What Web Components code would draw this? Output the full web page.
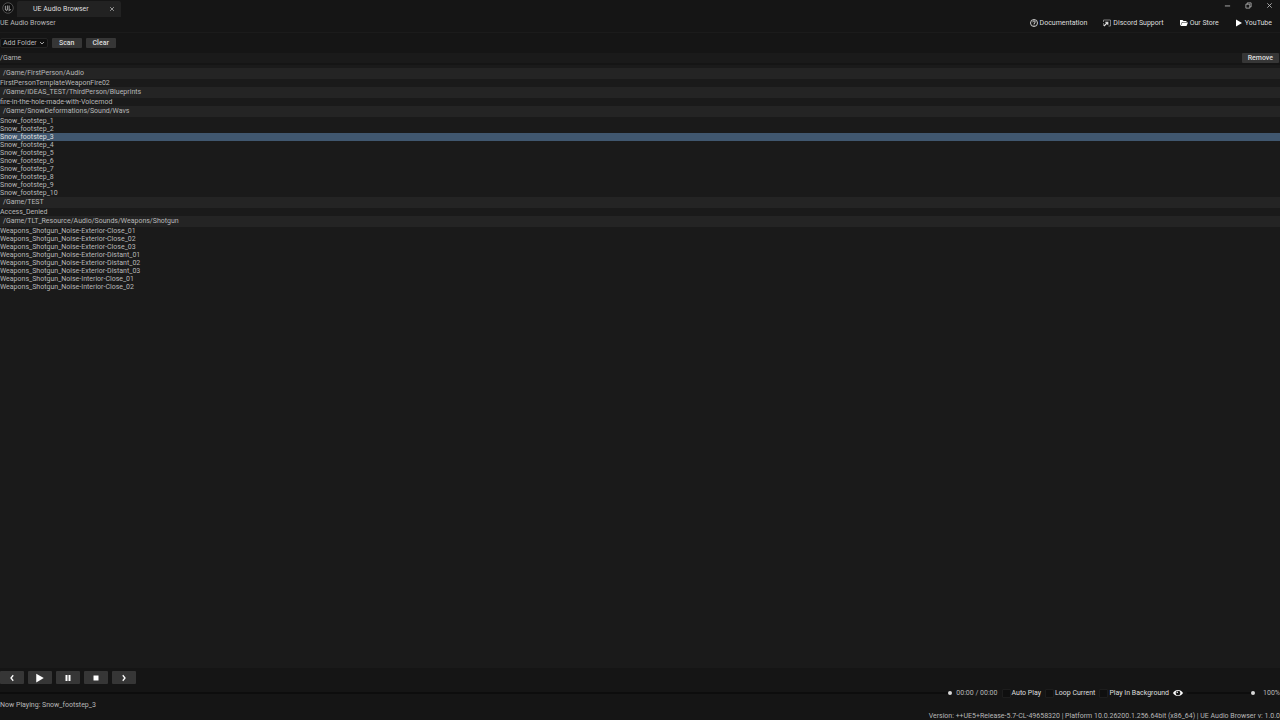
<!DOCTYPE html>
<html lang="en">
<head>
<meta charset="utf-8">
<title>UE Audio Browser</title>
<style>
    :root {
        --bar: #151515;
        --panel: #1a1a1a;
        --header: #242424;
        --button: #363636;
        --select: #40576f;
        --text: #b8b8b8;
        --bright: #dedede;
    }
    body {
        margin: 0;
        background: var(--bar);
        color: var(--text);
        font: 7px/8px Roboto, "Liberation Sans", sans-serif;
    }
</style>
</head>
<body>
<audio-browser></audio-browser>

<script>
const icons = {
    logo: '<circle cx="8" cy="8" r="7" fill="#0c0c0c" stroke="#666" stroke-width="1"/><path d="M4.500 5v5L7 11.800M7.200 4.500v6M9.500 4.500v7L12 9.800" fill="none" stroke="#999" stroke-width="1.400"/>',
    close: '<path d="M3 3l10 10M13 3L3 13" fill="none" stroke="currentColor" stroke-width="2"/>',
    minimize: '<path d="M2 9h12" fill="none" stroke="currentColor" stroke-width="2"/>',
    restore: '<path d="M2 5h9v9H2zM5 5V2h9v9h-3" fill="none" stroke="currentColor" stroke-width="1.800"/>',
    help: '<circle cx="8" cy="8" r="7" fill="none" stroke="currentColor" stroke-width="1.800"/><path d="M5.500 6.500C5.500 3 10.500 3 10.500 6c0 1.500-2.500 2-2.500 4M8 11.200v1.800" fill="none" stroke="currentColor" stroke-width="2"/>',
    discord: '<path d="M1 6V2h14v12h-4" fill="none" stroke="#999" stroke-width="1.600"/><path d="M2 14l6-6M4.500 6.500H9.500V11.500" fill="none" stroke="currentColor" stroke-width="2.400"/><path d="M1 8v6" stroke="#999" stroke-width="1.400"/>',
    folder: '<path d="M0 13V2h5l2 2h6v2H4L1 13zM4.500 7H16l-3 7H1.500z" fill="#fff"/>',
    play: '<path d="M2 1v14l12-7z" fill="#fff"/>',
    pause: '<path d="M3 2h4v12H3zM9 2h4v12H9z" fill="currentColor"/>',
    stop: '<path d="M3 3h10v10H3z" fill="currentColor"/>',
    prev: '<path d="M10.500 2.500L6 8l4.500 5.500" fill="none" stroke="currentColor" stroke-width="2.600"/>',
    next: '<path d="M5.500 2.500L10 8l-4.500 5.500" fill="none" stroke="currentColor" stroke-width="2.600"/>',
    down: '<path d="M3 5.500L8 10.500 13 5.500" fill="none" stroke="currentColor" stroke-width="2.600"/>',
    eye: '<path d="M0 8C3.500 1.500 12.500 1.500 16 8 12.500 14.500 3.500 14.500 0 8z" fill="#fff"/><circle cx="8" cy="8" r="3.800" fill="#151515"/><circle cx="6.800" cy="6.800" r="1.200" fill="#fff"/>'
};

class UeIcon extends HTMLElement {
    connectedCallback() {
        const size = this.getAttribute('size') || 8;
        this.attachShadow({ mode: 'open' }).innerHTML = `
            <style>
                :host { display: inline-flex; flex: none; }
                svg { display: block; }
            </style>
            <svg width="${size}" height="${size}" viewBox="0 0 16 16" aria-hidden="true">${icons[this.getAttribute('name')]}</svg>
        `;
    }
}

class UeButton extends HTMLElement {
    connectedCallback() {
        const label = this.getAttribute('label');
        this.attachShadow({ mode: 'open' }).innerHTML = `
            <style>
                :host { display: inline-flex; }
                button {
                    display: flex;
                    align-items: center;
                    justify-content: center;
                    gap: 2px;
                    min-width: 30px;
                    padding: 1px 6px;
                    border: 0;
                    border-radius: 1px;
                    background: var(--button);
                    color: var(--bright);
                    font: inherit;
                    font-weight: 500;
                }
                :host([kind="menu"]) button {
                    padding: 0 2px;
                    border: 1px solid #242424;
                    border-radius: 2px;
                    background: #0f0f0f;
                    color: var(--text);
                    font-weight: 400;
                }
                :host([kind="plain"]) button {
                    min-width: 0;
                    padding: 0;
                    background: none;
                    color: var(--text);
                }
                :host([kind="transport"]) button {
                    min-width: 24px;
                    height: 13px;
                    color: #fff;
                }
            </style>
            <button type="button" ${label ? `aria-label="${label}"` : ''}><slot></slot></button>
        `;
    }
}

class UeLink extends HTMLElement {
    connectedCallback() {
        this.attachShadow({ mode: 'open' }).innerHTML = `
            <style>
                :host { display: block; }
                a {
                    display: flex;
                    align-items: center;
                    gap: 2px;
                    color: var(--bright);
                    text-decoration: none;
                }
            </style>
            <a href="#"><ue-icon name="${this.getAttribute('icon')}"></ue-icon><slot></slot></a>
        `;
    }
}

class UeCheck extends HTMLElement {
    connectedCallback() {
        this.attachShadow({ mode: 'open' }).innerHTML = `
            <style>
                :host { display: block; }
                label { display: flex; align-items: center; gap: 1px; color: var(--bright); }
                input {
                    appearance: none;
                    width: 9px;
                    height: 9px;
                    margin: 0;
                    border: 1px solid #1d1d1d;
                    border-radius: 1px;
                    background: #0f0f0f;
                }
                input:checked { background: #0070e0; }
            </style>
            <label><input type="checkbox"><slot></slot></label>
        `;
    }
}

class UeSlider extends HTMLElement {
    connectedCallback() {
        this.attachShadow({ mode: 'open' }).innerHTML = `
            <style>
                :host { display: flex; }
                input {
                    appearance: none;
                    flex: 1;
                    min-width: 0;
                    height: 6px;
                    margin: 0;
                    background: linear-gradient(#0d0d0d, #0d0d0d) center / 100% 2px no-repeat;
                }
                input::-webkit-slider-thumb {
                    appearance: none;
                    width: 4px;
                    height: 4px;
                    border-radius: 50%;
                    background: #d8d8d8;
                }
            </style>
            <input type="range" min="0" max="100" value="100" aria-label="${this.getAttribute('label')}">
        `;
    }
}

class SoundGroup extends HTMLElement {
    connectedCallback() {
        const selected = this.getAttribute('selected');
        const items = this.getAttribute('items').split('|');
        this.attachShadow({ mode: 'open' }).innerHTML = `
            <style>
                :host { display: block; }
                h2 {
                    margin: 0;
                    padding: 1px 3px 2px;
                    background: var(--header);
                    font: inherit;
                }
                ul { margin: 0; padding: 0; list-style: none; }
                li[aria-current] { background: var(--select); color: var(--bright); }
            </style>
            <h2>${this.getAttribute('path')}</h2>
            <ul>${items.map(i => `<li${i === selected ? ' aria-current="true"' : ''}>${i}</li>`).join('')}</ul>
        `;
    }
}

class TitleBar extends HTMLElement {
    connectedCallback() {
        this.attachShadow({ mode: 'open' }).innerHTML = `
            <style>
                :host { display: flex; align-items: flex-start; height: 18px; }
                .logo { margin: 2px 3px 0 2px; }
                .tab {
                    display: flex;
                    align-items: center;
                    justify-content: space-between;
                    width: 82px;
                    height: 16px;
                    margin-top: 1px;
                    padding: 0 6px 0 16px;
                    border-radius: 2px 2px 0 0;
                    background: #222;
                    color: var(--bright);
                }
                .window { display: flex; gap: 14px; margin: 2px 7px 0 auto; }
            </style>
            <ue-icon class="logo" name="logo" size="12"></ue-icon>
            <div class="tab">
                <span>UE Audio Browser</span>
                <ue-button kind="plain" label="Close tab"><ue-icon name="close" size="6"></ue-icon></ue-button>
            </div>
            <div class="window">
                <ue-button kind="plain" label="Minimize"><ue-icon name="minimize" size="7"></ue-icon></ue-button>
                <ue-button kind="plain" label="Restore"><ue-icon name="restore" size="7"></ue-icon></ue-button>
                <ue-button kind="plain" label="Close"><ue-icon name="close" size="7"></ue-icon></ue-button>
            </div>
        `;
    }
}

class PlayerBar extends HTMLElement {
    connectedCallback() {
        this.attachShadow({ mode: 'open' }).innerHTML = `
            <style>
                :host { display: block; padding-top: 3px; }
                .transport { display: flex; gap: 4px; }
                .seek { display: flex; align-items: center; height: 10px; margin-top: 4px; }
                .seek > ue-slider:first-child { flex: 1; }
                .time { margin: 0 4px; }
                .checks { display: flex; gap: 4px; }
                .eye { margin: 0 4px; }
                .volume { width: 68px; }
                .percent { margin-left: 8px; }
                .now { margin-top: 3px; }
                .version { margin-top: 3px; text-align: right; }
            </style>
            <div class="transport">
                <ue-button kind="transport" label="Previous"><ue-icon name="prev"></ue-icon></ue-button>
                <ue-button kind="transport" label="Play"><ue-icon name="play" size="10"></ue-icon></ue-button>
                <ue-button kind="transport" label="Pause"><ue-icon name="pause"></ue-icon></ue-button>
                <ue-button kind="transport" label="Stop"><ue-icon name="stop"></ue-icon></ue-button>
                <ue-button kind="transport" label="Next"><ue-icon name="next"></ue-icon></ue-button>
            </div>
            <div class="seek">
                <ue-slider label="Position"></ue-slider>
                <span class="time">00:00 / 00:00</span>
                <div class="checks">
                    <ue-check>Auto Play</ue-check>
                    <ue-check>Loop Current</ue-check>
                    <ue-check>Play In Background</ue-check>
                </div>
                <ue-button class="eye" kind="plain" label="Show volume"><ue-icon name="eye" size="10"></ue-icon></ue-button>
                <ue-slider class="volume" label="Volume"></ue-slider>
                <span class="percent">100%</span>
            </div>
            <div class="now">Now Playing: Snow_footstep_3</div>
            <div class="version">Version: ++UE5+Release-5.7-CL-49658320 | Platform 10.0.26200.1.256.64bit (x86_64) | UE Audio Browser v: 1.0.0</div>
        `;
    }
}

class AudioBrowser extends HTMLElement {
    connectedCallback() {
        this.attachShadow({ mode: 'open' }).innerHTML = `
            <style>
                :host { display: flex; flex-direction: column; height: 100vh; overflow: hidden; }
                .menu { display: flex; justify-content: space-between; align-items: center; height: 10px; }
                nav { display: flex; gap: 16px; margin-right: 8px; }
                .tools {
                    display: flex;
                    gap: 4px;
                    margin-top: 4px;
                    padding: 5px 0;
                    border-top: 1px solid #1b1b1b;
                }
                .root {
                    display: flex;
                    justify-content: space-between;
                    align-items: center;
                    padding-right: 1px;
                    background: var(--panel);
                }
                main { flex: 1; min-height: 0; margin-top: 2px; padding-top: 3px; background: var(--panel); overflow: hidden; }
            </style>
            <title-bar></title-bar>
            <div class="menu">
                <span>UE Audio Browser</span>
                <nav>
                    <ue-link icon="help">Documentation</ue-link>
                    <ue-link icon="discord">Discord Support</ue-link>
                    <ue-link icon="folder">Our Store</ue-link>
                    <ue-link icon="play">YouTube</ue-link>
                </nav>
            </div>
            <div class="tools">
                <ue-button kind="menu">Add Folder <ue-icon name="down" size="6"></ue-icon></ue-button>
                <ue-button>Scan</ue-button>
                <ue-button>Clear</ue-button>
            </div>
            <div class="root"><span>/Game</span><ue-button>Remove</ue-button></div>
            <main>
                <sound-group path="/Game/FirstPerson/Audio" items="FirstPersonTemplateWeaponFire02"></sound-group>
                <sound-group path="/Game/IDEAS_TEST/ThirdPerson/Blueprints" items="fire-in-the-hole-made-with-Voicemod"></sound-group>
                <sound-group path="/Game/SnowDeformations/Sound/Wavs" selected="Snow_footstep_3"
                    items="Snow_footstep_1|Snow_footstep_2|Snow_footstep_3|Snow_footstep_4|Snow_footstep_5|Snow_footstep_6|Snow_footstep_7|Snow_footstep_8|Snow_footstep_9|Snow_footstep_10"></sound-group>
                <sound-group path="/Game/TEST" items="Access_Denied"></sound-group>
                <sound-group path="/Game/TLT_Resource/Audio/Sounds/Weapons/Shotgun"
                    items="Weapons_Shotgun_Noise-Exterior-Close_01|Weapons_Shotgun_Noise-Exterior-Close_02|Weapons_Shotgun_Noise-Exterior-Close_03|Weapons_Shotgun_Noise-Exterior-Distant_01|Weapons_Shotgun_Noise-Exterior-Distant_02|Weapons_Shotgun_Noise-Exterior-Distant_03|Weapons_Shotgun_Noise-Interior-Close_01|Weapons_Shotgun_Noise-Interior-Close_02"></sound-group>
            </main>
            <player-bar></player-bar>
        `;
    }
}

customElements.define('ue-icon', UeIcon);
customElements.define('ue-button', UeButton);
customElements.define('ue-link', UeLink);
customElements.define('ue-check', UeCheck);
customElements.define('ue-slider', UeSlider);
customElements.define('sound-group', SoundGroup);
customElements.define('title-bar', TitleBar);
customElements.define('player-bar', PlayerBar);
customElements.define('audio-browser', AudioBrowser);
</script>
</body>
</html>
